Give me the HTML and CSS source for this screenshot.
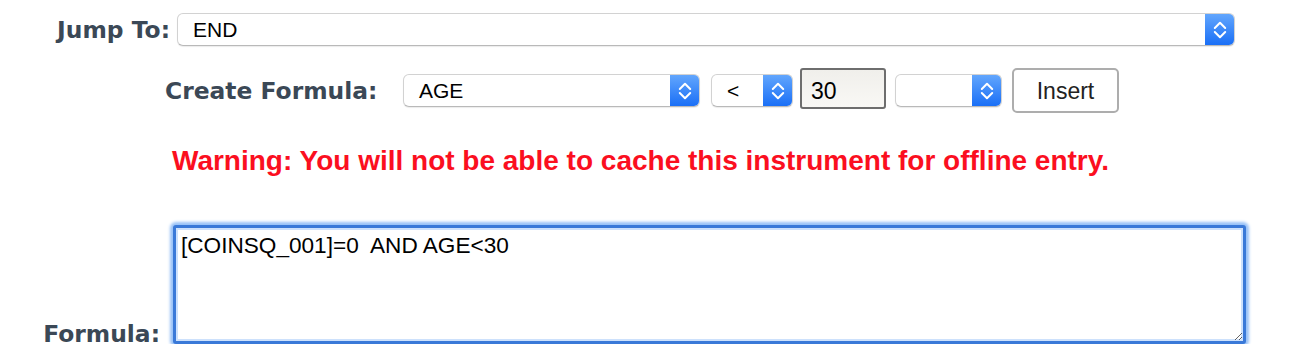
FILE: index.html
```html
<!DOCTYPE html>
<html lang="en">
<head>
  <meta charset="UTF-8" />
  <title>Branching Logic</title>
  <link rel="stylesheet" href="styles.css">
</head>
<body>

  <div class="row jump-row">
    <label class="label jump-label">Jump To:</label>
    <div class="select jump-select">
      <span class="select-text">END</span>
      <span class="select-arrow"><svg width="14" height="20" viewBox="0 0 14 20"><path d="M1.8 8 L7 2.8 L12.2 8 M1.8 12 L7 17.2 L12.2 12" fill="none" stroke="#fff" stroke-width="2" stroke-linecap="round" stroke-linejoin="round"/></svg></span>
    </div>
  </div>

  <div class="row create-row">
    <label class="label create-label">Create Formula:</label>
    <div class="select field-select">
      <span class="select-text">AGE</span>
      <span class="select-arrow"><svg width="14" height="20" viewBox="0 0 14 20"><path d="M1.8 8 L7 2.8 L12.2 8 M1.8 12 L7 17.2 L12.2 12" fill="none" stroke="#fff" stroke-width="2" stroke-linecap="round" stroke-linejoin="round"/></svg></span>
    </div>
    <div class="select op-select">
      <span class="select-text">&lt;</span>
      <span class="select-arrow"><svg width="14" height="20" viewBox="0 0 14 20"><path d="M1.8 8 L7 2.8 L12.2 8 M1.8 12 L7 17.2 L12.2 12" fill="none" stroke="#fff" stroke-width="2" stroke-linecap="round" stroke-linejoin="round"/></svg></span>
    </div>
    <input class="value-input" type="text" value="30">
    <div class="select join-select">
      <span class="select-text"></span>
      <span class="select-arrow"><svg width="14" height="20" viewBox="0 0 14 20"><path d="M1.8 8 L7 2.8 L12.2 8 M1.8 12 L7 17.2 L12.2 12" fill="none" stroke="#fff" stroke-width="2" stroke-linecap="round" stroke-linejoin="round"/></svg></span>
    </div>
    <button class="insert-btn">Insert</button>
  </div>

  <div class="warning">Warning: You will not be able to cache this instrument for offline entry.</div>

  <div class="row formula-row">
    <label class="label formula-label">Formula:</label>
    <textarea class="formula-box">[COINSQ_001]=0  AND AGE&lt;30</textarea>
  </div>

</body>
</html>
```

FILE: styles.css
```css
body {
  margin: 0;
  font-family: 'Liberation Sans', Arial, sans-serif;
  background: #fff;
}
.row {
  display: flex;
}
.label {
  font-family: 'DejaVu Sans', Verdana, sans-serif;
  font-weight: bold;
  font-size: 23.4px;
  line-height: 28px;
  color: #3b4856;
}
.jump-row {
  padding-top: 13px;
  align-items: center;
}
.jump-label {
  width: 170px;
  text-align: right;
}
.select {
  display: flex;
  height: 33px;
  box-sizing: border-box;
  border: 1px solid #d2d2d2;
  border-bottom-color: #b9b9b9;
  border-radius: 6px;
  background: #fff;
  box-shadow: 0 1px 1px rgba(0,0,0,0.08);
  overflow: hidden;
}
.select-text {
  flex: 1;
  font-size: 21px;
  line-height: 32px;
  padding-left: 15px;
  color: #000;
}
.select-arrow {
  width: 29px;
  display: flex;
  align-items: center;
  justify-content: center;
  background: linear-gradient(#62a6fd, #1a6ff6);
}
.jump-select {
  margin-left: 7px;
  width: 1058px;
}
.create-row {
  margin-top: 22px;
  align-items: center;
}
.create-label {
  margin-left: 165px;
  width: 238px;
}
.field-select {
  width: 297px;
}
.op-select {
  width: 82px;
  margin-left: 11px;
}
.value-input {
  margin-left: 7px;
  width: 86px;
  height: 41px;
  margin-top: -4px;
  box-sizing: border-box;
  border: 2px solid #6e6e6e;
  border-radius: 3px;
  background: linear-gradient(#f0efeb, #f9f8f5);
  font-family: 'Liberation Sans', Arial, sans-serif;
  font-size: 23px;
  padding: 5px 9px 0;
  color: #000;
  outline: none;
}
.join-select {
  width: 107px;
  margin-left: 9px;
}
.insert-btn {
  margin-left: 10px;
  width: 107px;
  height: 45px;
  border: 2px solid #adadad;
  border-radius: 5px;
  background: #fff;
  font-family: 'Liberation Sans', Arial, sans-serif;
  font-size: 23px;
  padding-top: 3px;
  color: #222;
}
.warning {
  margin-top: 32px;
  margin-left: 172px;
  color: #fb0f1f;
  font-weight: bold;
  font-size: 28px;
  line-height: 32px;
}
.formula-row {
  margin-top: 48px;
  align-items: flex-end;
}
.formula-label {
  width: 160px;
  text-align: right;
  margin-bottom: -4px;
}
.formula-box {
  margin-left: 13px;
  width: 1073px;
  height: 119px;
  box-sizing: border-box;
  border: 3px solid #3a79d8;
  border-radius: 3px;
  box-shadow: 0 0 3px 3px #99c2f7, inset 0 0 0 2px #cde1fc;
  outline: none;
  font-family: 'Liberation Sans', Arial, sans-serif;
  font-size: 22.6px;
  padding: 5px 5px;
  color: #000;
  resize: both;
}
```
